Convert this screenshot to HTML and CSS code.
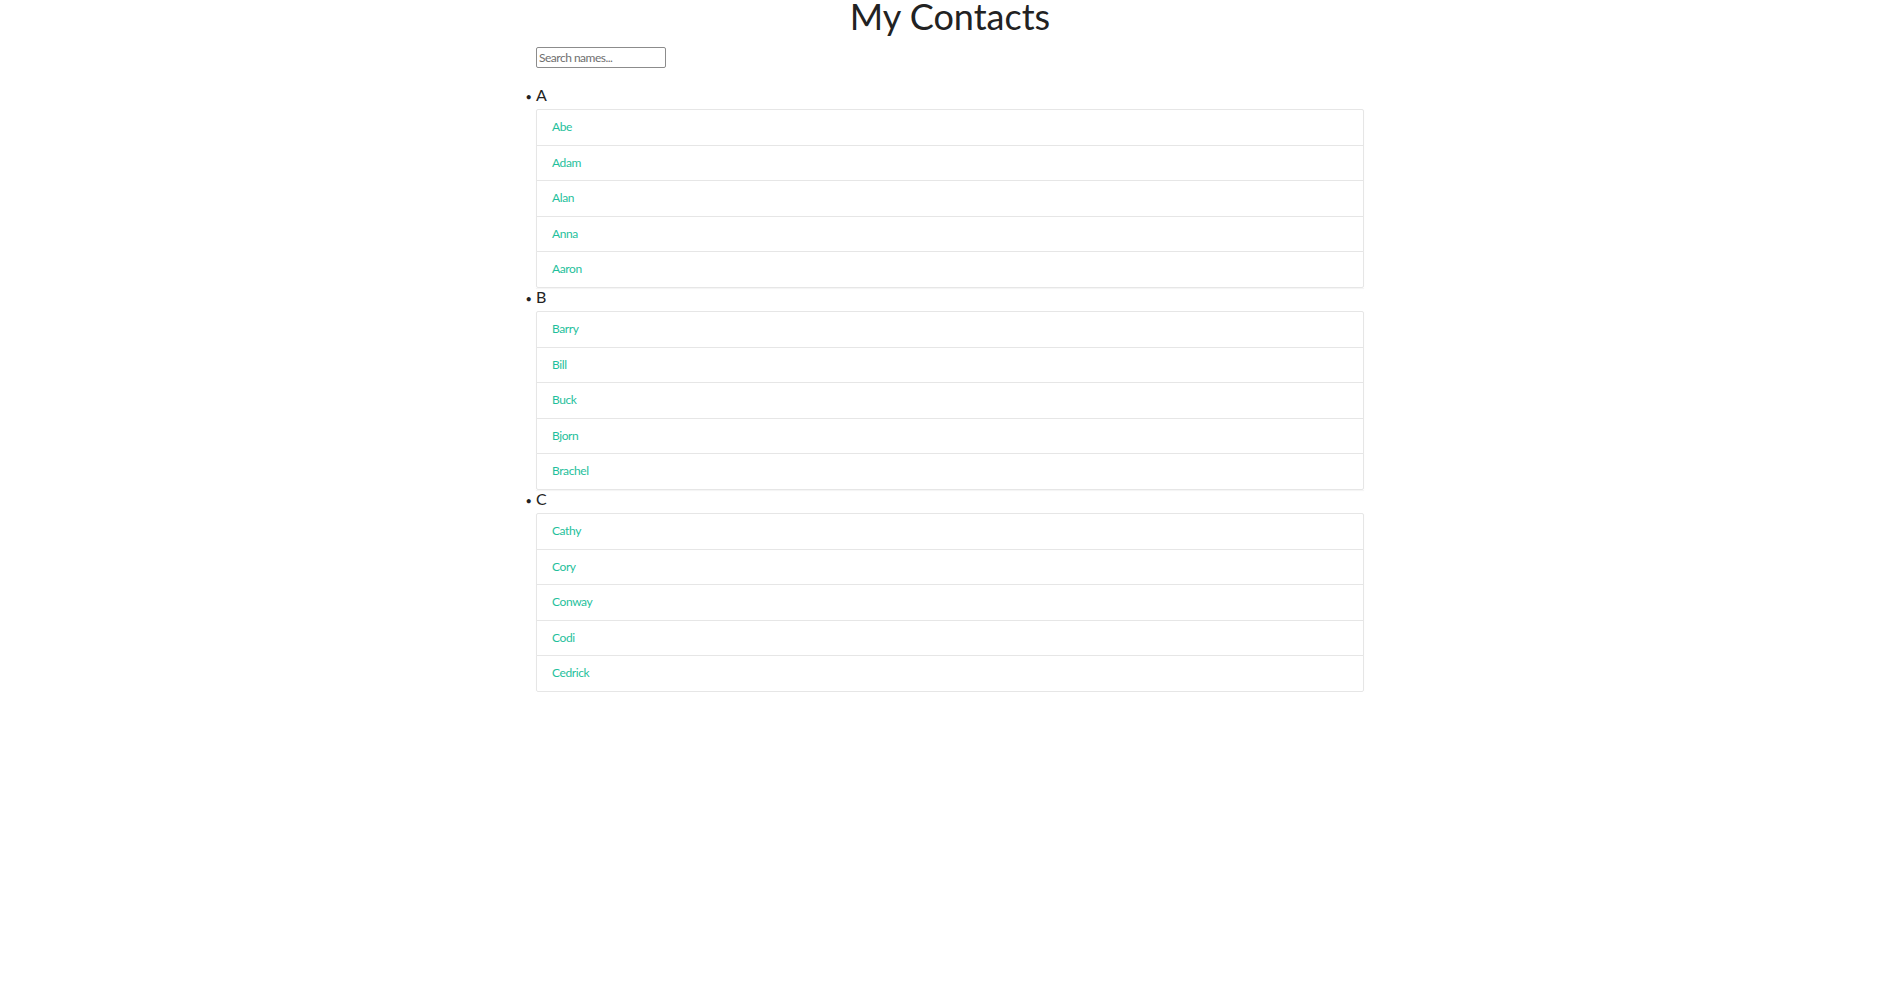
FILE: index.html
```html
<!DOCTYPE html>
<html lang="en">
<head>
<meta charset="utf-8">
<title>My Contacts</title>
<link rel="stylesheet" href="styles.css">
</head>
<body>
<div class="page">
  <h1 class="title">My Contacts</h1>
  <div class="search-row">
    <input class="search" type="text" placeholder="Search names...">
  </div>
  <ul class="letters">
    <li class="letter">
      <div class="letter-label">A</div>
      <div class="list-group">
        <a class="list-item" href="#">Abe</a>
        <a class="list-item" href="#">Adam</a>
        <a class="list-item" href="#">Alan</a>
        <a class="list-item" href="#">Anna</a>
        <a class="list-item" href="#">Aaron</a>
      </div>
    </li>
    <li class="letter">
      <div class="letter-label">B</div>
      <div class="list-group">
        <a class="list-item" href="#">Barry</a>
        <a class="list-item" href="#">Bill</a>
        <a class="list-item" href="#">Buck</a>
        <a class="list-item" href="#">Bjorn</a>
        <a class="list-item" href="#">Brachel</a>
      </div>
    </li>
    <li class="letter">
      <div class="letter-label">C</div>
      <div class="list-group">
        <a class="list-item" href="#">Cathy</a>
        <a class="list-item" href="#">Cory</a>
        <a class="list-item" href="#">Conway</a>
        <a class="list-item" href="#">Codi</a>
        <a class="list-item" href="#">Cedrick</a>
      </div>
    </li>
  </ul>
</div>
</body>
</html>
```
FILE: styles.css
```css
html, body {
  margin: 0;
  padding: 0;
  background: #ffffff;
}

body {
  font-family: Lato, "Open Sans", "Liberation Sans", sans-serif;
  font-size: 16px;
  color: #222222;
}

.page {
  width: 828px;
  margin-left: calc(50% - 415px);
}

.title {
  margin: 0 0 15px 0;
  font-size: 36px;
  line-height: 32px;
  font-weight: 400;
  text-align: center;
  color: #222222;
}

.search-row {
  display: flex;
}

.search {
  box-sizing: border-box;
  width: 130px;
  height: 21px;
  padding: 1px 2px;
  border: 1px solid #8c8c8c;
  border-radius: 2px;
  font-family: Lato, "Open Sans", "Liberation Sans", sans-serif;
  font-size: 12px;
  letter-spacing: -0.5px;
  color: #333333;
  outline: none;
}

.search::placeholder {
  color: #6f6f6f;
}

.letters {
  margin: 18px 0 0 0;
  padding: 0;
  list-style: disc outside;
}

.letter {
  margin: 0;
}

.letter::marker {
  content: "\2022\00a0\2009";
  font-size: 11px;
}

.letter-label {
  font-size: 16px;
  line-height: 18px;
  padding-bottom: 5px;
  color: #222222;
}

.list-group {
  display: flex;
  flex-direction: column;
  box-shadow: 0 1px 1px rgba(0, 0, 0, 0.04);
}

.list-item {
  display: block;
  padding: 8px 15px 8px 15px;
  border: 1px solid #e6e6e6;
  margin-bottom: -1px;
  font-size: 12px;
  letter-spacing: -0.4px;
  line-height: 18.6px;
  color: #1fbf9c;
  text-decoration: none;
  background: #ffffff;
}

.list-item:last-child {
  margin-bottom: 0;
  border-bottom-left-radius: 2px;
  border-bottom-right-radius: 2px;
}

.list-item:first-child {
  border-top-left-radius: 2px;
  border-top-right-radius: 2px;
}
```
